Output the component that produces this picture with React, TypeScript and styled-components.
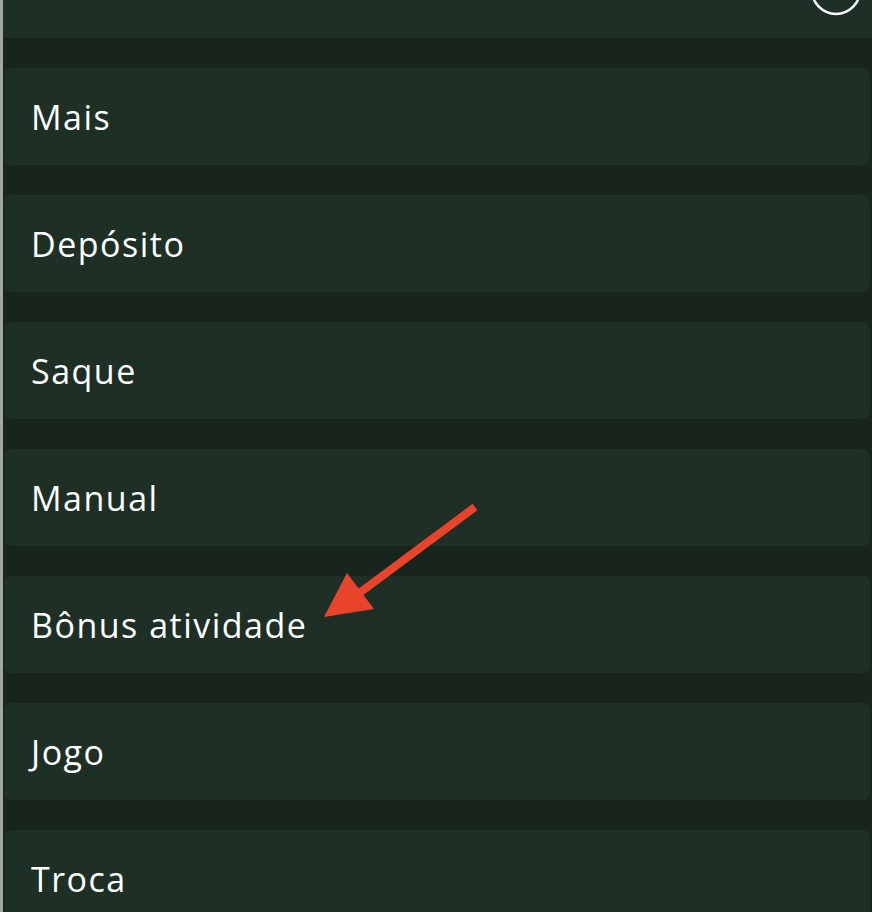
import React from "react";
import styled, { createGlobalStyle } from "styled-components";

const Global = createGlobalStyle`
  html, body { margin: 0; padding: 0; background: #18251d; }
  body { font-family: "Open Sans", "Noto Sans", sans-serif; }
`;

const Page = styled.div`
  position: relative;
  min-height: 912px;
  border-left: 3px solid #a3a6a4;
  background: #18251d;
  overflow: hidden;
  box-sizing: border-box;
`;

const Header = styled.div`
  position: relative;
  height: 38px;
  background: #1e2f25;
`;

const CloseIcon = styled.svg`
  position: absolute;
  right: 9px;
  top: -37px;
  width: 54px;
  height: 54px;
`;

const List = styled.div`
  display: flex;
  flex-direction: column;
  gap: 30px;
  padding: 30px 2px 0 1px;
`;

const Item = styled.div`
  height: 97px;
  display: flex;
  align-items: center;
  padding-left: 27px;
  background: #1e2f25;
  border-radius: 7px;
  color: #ffffff;
  font-size: 34px;
  font-weight: 400;
  letter-spacing: 1.5px;
`;

const Annotation = styled.svg`
  position: absolute;
  left: 0;
  top: 0;
  width: 872px;
  height: 912px;
  pointer-events: none;
`;

const items = ["Mais", "Depósito", "Saque", "Manual", "Bônus atividade", "Jogo", "Troca"];

export default function App() {
  return (
    <>
      <Global />
      <Page>
        <Header>
          <CloseIcon viewBox="0 0 54 54">
            <circle cx="27" cy="27" r="24" fill="none" stroke="#fff" strokeWidth="2.5" />
            <path d="M20 20 L34 34 M34 20 L20 34" stroke="#fff" strokeWidth="2.2" strokeLinecap="round" />
          </CloseIcon>
        </Header>
        <List>
          {items.map((t) => (
            <Item key={t}>{t}</Item>
          ))}
        </List>
        <Annotation viewBox="0 0 872 912">
          <line x1="472" y1="507" x2="355" y2="594" stroke="#e8432b" strokeWidth="8" />
          <polygon points="321,617 344,573 371,609" fill="#e8432b" />
        </Annotation>
      </Page>
    </>
  );
}
